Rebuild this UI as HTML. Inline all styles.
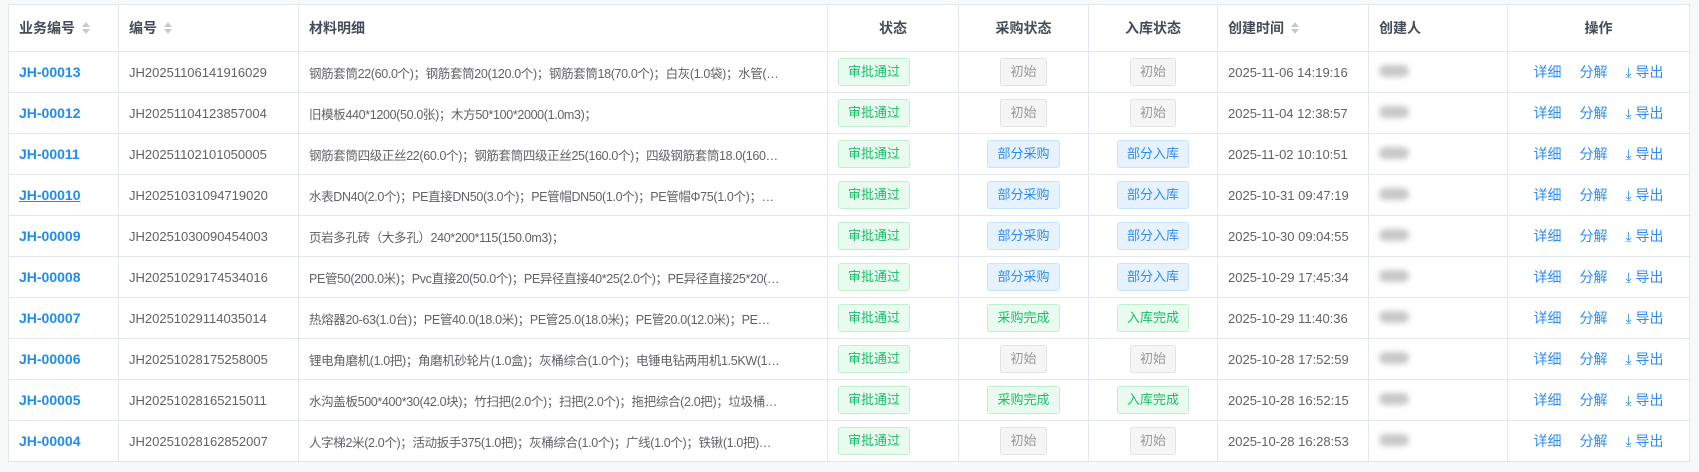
<!DOCTYPE html>
<html><head><meta charset="utf-8"><style>
*{margin:0;padding:0;box-sizing:border-box}
body{width:1699px;height:472px;background:#f7f8fa;font-family:"Liberation Sans","Noto Sans CJK SC",sans-serif;overflow:hidden;position:relative}
table{position:absolute;left:8px;top:4px;border-collapse:collapse;table-layout:fixed;width:1681px;background:#fff}
td,th{border:1px solid #e3e7ee;height:41px;font-size:13px;color:#606266;white-space:nowrap;overflow:hidden;padding:0 10px;text-align:left;font-weight:normal}
th{height:47px;font-size:14px;font-weight:bold;color:#454b57}
.c{text-align:center}
.s{display:inline-block;vertical-align:middle;margin-left:6px;width:10px;height:14px;position:relative;top:-1px}
.s:before,.s:after{content:"";position:absolute;left:1px;border-left:4px solid transparent;border-right:4px solid transparent}
.s:before{top:1px;border-bottom:5px solid #c5c9d0}
.s:after{top:8px;border-top:5px solid #c5c9d0}
a{color:#1f8cf0;font-weight:bold;font-size:14px;text-decoration:none}
.m{display:block;width:472px;overflow:hidden;text-overflow:ellipsis;font-size:12.5px;letter-spacing:-0.35px}
.t{display:inline-block;height:28px;line-height:26px;padding:0 9px;border-radius:3px;font-size:13px;border:1px solid}
.g{background:#e9fbef;border-color:#c0efd0;color:#19be6b}
.n{background:#f5f5f5;border-color:#e3e3e3;color:#999}
.b{background:#e6f3ff;border-color:#c6e2ff;color:#2d8cf0}
.blur{display:inline-block;width:30px;height:12px;border-radius:6px;background:#c8c8c8;filter:blur(3px)}
.op{color:#2d8cf0;font-size:14px}
.op span{margin:0 9px}
</style></head><body>
<table>
<colgroup><col style="width:110px"><col style="width:180px"><col style="width:529px"><col style="width:131px"><col style="width:130px"><col style="width:129px"><col style="width:151px"><col style="width:139px"><col style="width:182px"></colgroup>
<tr><th>业务编号<i class="s"></i></th><th>编号<i class="s"></i></th><th>材料明细</th><th class="c">状态</th><th class="c">采购状态</th><th class="c">入库状态</th><th>创建时间<i class="s"></i></th><th>创建人</th><th class="c">操作</th></tr>
<tr><td><a>JH-00013</a></td><td>JH20251106141916029</td><td><span class="m">钢筋套筒22(60.0个)；钢筋套筒20(120.0个)；钢筋套筒18(70.0个)；白灰(1.0袋)；水管(30.0米)；</span></td><td><span class="t g">审批通过</span></td><td class="c"><span class="t n">初始</span></td><td class="c"><span class="t n">初始</span></td><td>2025-11-06 14:19:16</td><td><i class="blur"></i></td><td class="c op"><span>详细</span><span>分解</span><span>⤓ 导出</span></td></tr>
<tr><td><a>JH-00012</a></td><td>JH20251104123857004</td><td><span class="m">旧模板440*1200(50.0张)；木方50*100*2000(1.0m3)；</span></td><td><span class="t g">审批通过</span></td><td class="c"><span class="t n">初始</span></td><td class="c"><span class="t n">初始</span></td><td>2025-11-04 12:38:57</td><td><i class="blur"></i></td><td class="c op"><span>详细</span><span>分解</span><span>⤓ 导出</span></td></tr>
<tr><td><a>JH-00011</a></td><td>JH20251102101050005</td><td><span class="m">钢筋套筒四级正丝22(60.0个)；钢筋套筒四级正丝25(160.0个)；四级钢筋套筒18.0(160.0个)；万能接头(20.0个)</span></td><td><span class="t g">审批通过</span></td><td class="c"><span class="t b">部分采购</span></td><td class="c"><span class="t b">部分入库</span></td><td>2025-11-02 10:10:51</td><td><i class="blur"></i></td><td class="c op"><span>详细</span><span>分解</span><span>⤓ 导出</span></td></tr>
<tr><td><a style="text-decoration:underline">JH-00010</a></td><td>JH20251031094719020</td><td><span class="m">水表DN40(2.0个)；PE直接DN50(3.0个)；PE管帽DN50(1.0个)；PE管帽Φ75(1.0个)；多联PE异径直接(1.0个)</span></td><td><span class="t g">审批通过</span></td><td class="c"><span class="t b">部分采购</span></td><td class="c"><span class="t b">部分入库</span></td><td>2025-10-31 09:47:19</td><td><i class="blur"></i></td><td class="c op"><span>详细</span><span>分解</span><span>⤓ 导出</span></td></tr>
<tr><td><a>JH-00009</a></td><td>JH20251030090454003</td><td><span class="m">页岩多孔砖（大多孔）240*200*115(150.0m3)；</span></td><td><span class="t g">审批通过</span></td><td class="c"><span class="t b">部分采购</span></td><td class="c"><span class="t b">部分入库</span></td><td>2025-10-30 09:04:55</td><td><i class="blur"></i></td><td class="c op"><span>详细</span><span>分解</span><span>⤓ 导出</span></td></tr>
<tr><td><a>JH-00008</a></td><td>JH20251029174534016</td><td><span class="m">PE管50(200.0米)；Pvc直接20(50.0个)；PE异径直接40*25(2.0个)；PE异径直接25*20(2.0个)；PE管帽(2.0个)</span></td><td><span class="t g">审批通过</span></td><td class="c"><span class="t b">部分采购</span></td><td class="c"><span class="t b">部分入库</span></td><td>2025-10-29 17:45:34</td><td><i class="blur"></i></td><td class="c op"><span>详细</span><span>分解</span><span>⤓ 导出</span></td></tr>
<tr><td><a>JH-00007</a></td><td>JH20251029114035014</td><td><span class="m">热熔器20-63(1.0台)；PE管40.0(18.0米)；PE管25.0(18.0米)；PE管20.0(12.0米)；PE管DN32(12.0米)；</span></td><td><span class="t g">审批通过</span></td><td class="c"><span class="t g">采购完成</span></td><td class="c"><span class="t g">入库完成</span></td><td>2025-10-29 11:40:36</td><td><i class="blur"></i></td><td class="c op"><span>详细</span><span>分解</span><span>⤓ 导出</span></td></tr>
<tr><td><a>JH-00006</a></td><td>JH20251028175258005</td><td><span class="m">锂电角磨机(1.0把)；角磨机砂轮片(1.0盒)；灰桶综合(1.0个)；电锤电钻两用机1.5KW(1.0台)；</span></td><td><span class="t g">审批通过</span></td><td class="c"><span class="t n">初始</span></td><td class="c"><span class="t n">初始</span></td><td>2025-10-28 17:52:59</td><td><i class="blur"></i></td><td class="c op"><span>详细</span><span>分解</span><span>⤓ 导出</span></td></tr>
<tr><td><a>JH-00005</a></td><td>JH20251028165215011</td><td><span class="m">水沟盖板500*400*30(42.0块)；竹扫把(2.0个)；扫把(2.0个)；拖把综合(2.0把)；垃圾桶综合(3.0个)</span></td><td><span class="t g">审批通过</span></td><td class="c"><span class="t g">采购完成</span></td><td class="c"><span class="t g">入库完成</span></td><td>2025-10-28 16:52:15</td><td><i class="blur"></i></td><td class="c op"><span>详细</span><span>分解</span><span>⤓ 导出</span></td></tr>
<tr><td><a>JH-00004</a></td><td>JH20251028162852007</td><td><span class="m">人字梯2米(2.0个)；活动扳手375(1.0把)；灰桶综合(1.0个)；广线(1.0个)；铁锹(1.0把)；红铅笔(2.0支)</span></td><td><span class="t g">审批通过</span></td><td class="c"><span class="t n">初始</span></td><td class="c"><span class="t n">初始</span></td><td>2025-10-28 16:28:53</td><td><i class="blur"></i></td><td class="c op"><span>详细</span><span>分解</span><span>⤓ 导出</span></td></tr>
</table>
</body></html>
